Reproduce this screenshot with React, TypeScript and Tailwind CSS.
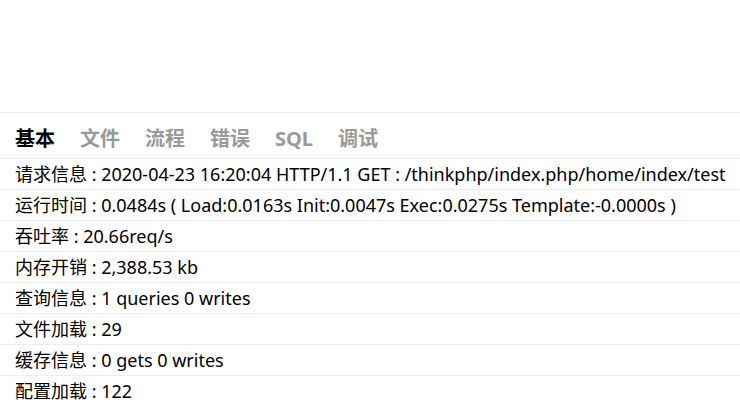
const tabs = ["基本", "文件", "流程", "错误", "SQL", "调试"];

const rows: [string, string][] = [
  ["请求信息", "2020-04-23 16:20:04 HTTP/1.1 GET : /thinkphp/index.php/home/index/test"],
  ["运行时间", "0.0484s ( Load:0.0163s Init:0.0047s Exec:0.0275s Template:-0.0000s )"],
  ["吞吐率", "20.66req/s"],
  ["内存开销", "2,388.53 kb"],
  ["查询信息", "1 queries 0 writes"],
  ["文件加载", "29"],
  ["缓存信息", "0 gets 0 writes"],
  ["配置加载", "122"],
];

export default function App() {
  return (
    <div className="w-[740px] h-[405px] overflow-hidden bg-white font-['Noto_Sans','Noto_Sans_CJK_SC',sans-serif]">
      <div className="mt-[112px]">
        {/* tab bar */}
        <div className="h-[47px] pt-[7px] px-[15px] border-y border-[#ececec] text-[20px]">
          {tabs.map((t, i) => (
            <span
              key={t}
              className={
                "inline-block h-[38px] leading-[38px] pr-[15px] mr-[10px] font-bold " +
                (i === 0 ? "text-black" : "text-[#999]")
              }
            >
              {t}
            </span>
          ))}
        </div>

        <ul className="text-[18px] text-black">
          {rows.map(([k, v]) => (
            <li key={k} className="border-b border-[#eee] px-[15px] leading-[30px] whitespace-nowrap">
              {k} : {v}
            </li>
          ))}
        </ul>
      </div>
    </div>
  );
}
